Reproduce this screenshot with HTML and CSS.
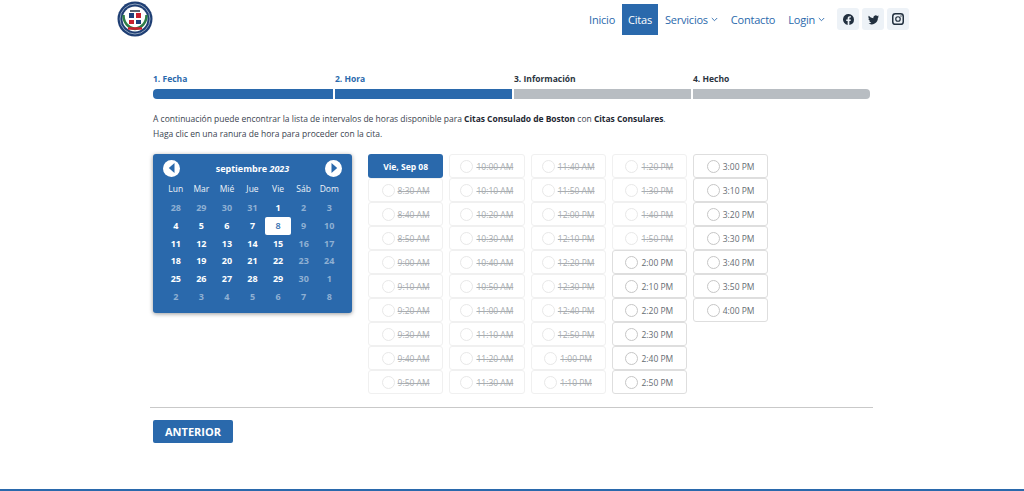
FILE: index.html
```html
<!DOCTYPE html>
<html lang="es">
<head>
<meta charset="utf-8">
<title>Citas</title>
<link rel="stylesheet" href="styles.css">
</head>
<body>
<header class="topbar">
  <a class="logo" href="#" aria-label="Logo">
    <svg width="36" height="36" viewBox="0 0 36 36">
      <circle cx="18" cy="18" r="17.500" fill="#1f3f74"/>
      <circle cx="18" cy="18" r="15" fill="none" stroke="#8fa3bd" stroke-width="1"/>
      <circle cx="18" cy="18" r="12.500" fill="#fff"/>
      <path d="M6.500 14c0 8 5 13 11.500 14 6.500-1 11.500-6 11.500-14" fill="none" stroke="#2e7d46" stroke-width="2.500"/>
      <path d="M13 9h10v2H13z" fill="#5a6472"/>
      <path d="M12 12h5v5h-5z" fill="#1d3f7c"/>
      <path d="M19 12h5v5h-5z" fill="#c8202f"/>
      <path d="M12 19h5v4h-5z" fill="#c8202f"/>
      <path d="M19 19h5v4h-5z" fill="#1d3f7c"/>
      <path d="M11 27.500h14" stroke="#c8202f" stroke-width="2.500"/>
    </svg>
  </a>
  <nav class="nav">
    <a href="#" class="nav-link">Inicio</a>
    <a href="#" class="nav-link active">Citas</a>
    <a href="#" class="nav-link">Servicios <svg class="caret" width="7" height="5" viewBox="0 0 7 5"><path d="M.8 1l2.700 2.700L6.200 1" fill="none" stroke="currentColor" stroke-width=".9"/></svg></a>
    <a href="#" class="nav-link">Contacto</a>
    <a href="#" class="nav-link">Login <svg class="caret" width="7" height="5" viewBox="0 0 7 5"><path d="M.8 1l2.700 2.700L6.200 1" fill="none" stroke="currentColor" stroke-width=".9"/></svg></a>
  </nav>
  <div class="socials">
    <a href="#" class="social" aria-label="Facebook"><svg width="11" height="11" viewBox="0 0 16 16"><path fill="#22303f" d="M16 8a8 8 0 1 0-9.250 7.900v-5.600H4.700V8h2.050V6.240c0-2 1.200-3.120 3.020-3.120.88 0 1.800.160 1.800.160v1.970h-1.010c-1 0-1.310.62-1.310 1.250V8h2.230l-.36 2.300H9.250v5.600A8 8 0 0 0 16 8z"/></svg></a>
    <a href="#" class="social" aria-label="Twitter"><svg width="11" height="11" viewBox="0 0 16 16"><path fill="#22303f" d="M16 3.500a6.500 6.500 0 0 1-1.900.5 3.300 3.300 0 0 0 1.450-1.800 6.600 6.600 0 0 1-2.100.8 3.300 3.300 0 0 0-5.600 3A9.300 9.300 0 0 1 1.100 2.600a3.300 3.300 0 0 0 1 4.400 3.300 3.300 0 0 1-1.500-.4c0 1.600 1.100 3 2.650 3.300a3.300 3.300 0 0 1-1.500.050 3.300 3.300 0 0 0 3.100 2.300A6.600 6.600 0 0 1 0 13.600 9.300 9.300 0 0 0 14.400 5.300c.6-.5 1.200-1.100 1.600-1.800z"/></svg></a>
    <a href="#" class="social" aria-label="Instagram"><svg width="12" height="12" viewBox="0 0 16 16"><rect x="1" y="1" width="14" height="14" rx="3.500" fill="none" stroke="#22303f" stroke-width="2"/><circle cx="8" cy="8" r="3" fill="none" stroke="#22303f" stroke-width="1.600"/><circle cx="12" cy="4" r=".9" fill="#22303f"/></svg></a>
  </div>
</header>

<main class="page">
  <ol class="steps">
    <li class="step first-step done"><span class="step-label">1. Fecha</span><span class="step-bar first"></span></li>
    <li class="step done"><span class="step-label">2. Hora</span><span class="step-bar"></span></li>
    <li class="step"><span class="step-label">3. Información</span><span class="step-bar"></span></li>
    <li class="step"><span class="step-label">4. Hecho</span><span class="step-bar last"></span></li>
  </ol>

  <p class="intro">A continuación puede encontrar la lista de intervalos de horas disponible para <b>Citas Consulado de Boston</b> con <b>Citas Consulares</b>.<br>Haga clic en una ranura de hora para proceder con la cita.</p>

  <div class="booking">
    <section class="calendar">
      <div class="cal-head">
        <span class="cal-arrow"><svg width="8" height="10" viewBox="0 0 8 10"><path d="M6.500 0v10L0.800 5z" fill="#2a69ac"/></svg></span>
        <span class="cal-title">septiembre <i>2023</i></span>
        <span class="cal-arrow"><svg width="8" height="10" viewBox="0 0 8 10"><path d="M1.500 0v10L7.200 5z" fill="#2a69ac"/></svg></span>
      </div>
      <div class="cal-grid names">
        <span>Lun</span><span>Mar</span><span>Mié</span><span>Jue</span><span>Vie</span><span>Sáb</span><span>Dom</span>
      </div>
      <div class="cal-grid days">
        <span class="off">28</span><span class="off">29</span><span class="off">30</span><span class="off">31</span><span>1</span><span class="off">2</span><span class="off">3</span>
        <span>4</span><span>5</span><span>6</span><span>7</span><span class="sel">8</span><span class="off">9</span><span class="off">10</span>
        <span>11</span><span>12</span><span>13</span><span>14</span><span>15</span><span class="off">16</span><span class="off">17</span>
        <span>18</span><span>19</span><span>20</span><span>21</span><span>22</span><span class="off">23</span><span class="off">24</span>
        <span>25</span><span>26</span><span>27</span><span>28</span><span>29</span><span class="off">30</span><span class="off">1</span>
        <span class="off">2</span><span class="off">3</span><span class="off">4</span><span class="off">5</span><span class="off">6</span><span class="off">7</span><span class="off">8</span>
      </div>
    </section>

    <div class="slots">
      <div class="slot-col">
        <div class="slot-date">Vie, Sep 08</div>
        <div class="slot gone"><i></i>8:30 AM</div>
        <div class="slot gone"><i></i>8:40 AM</div>
        <div class="slot gone"><i></i>8:50 AM</div>
        <div class="slot gone"><i></i>9:00 AM</div>
        <div class="slot gone"><i></i>9:10 AM</div>
        <div class="slot gone"><i></i>9:20 AM</div>
        <div class="slot gone"><i></i>9:30 AM</div>
        <div class="slot gone"><i></i>9:40 AM</div>
        <div class="slot gone"><i></i>9:50 AM</div>
      </div>
      <div class="slot-col">
        <div class="slot gone"><i></i>10:00 AM</div>
        <div class="slot gone"><i></i>10:10 AM</div>
        <div class="slot gone"><i></i>10:20 AM</div>
        <div class="slot gone"><i></i>10:30 AM</div>
        <div class="slot gone"><i></i>10:40 AM</div>
        <div class="slot gone"><i></i>10:50 AM</div>
        <div class="slot gone"><i></i>11:00 AM</div>
        <div class="slot gone"><i></i>11:10 AM</div>
        <div class="slot gone"><i></i>11:20 AM</div>
        <div class="slot gone"><i></i>11:30 AM</div>
      </div>
      <div class="slot-col">
        <div class="slot gone"><i></i>11:40 AM</div>
        <div class="slot gone"><i></i>11:50 AM</div>
        <div class="slot gone"><i></i>12:00 PM</div>
        <div class="slot gone"><i></i>12:10 PM</div>
        <div class="slot gone"><i></i>12:20 PM</div>
        <div class="slot gone"><i></i>12:30 PM</div>
        <div class="slot gone"><i></i>12:40 PM</div>
        <div class="slot gone"><i></i>12:50 PM</div>
        <div class="slot gone"><i></i>1:00 PM</div>
        <div class="slot gone"><i></i>1:10 PM</div>
      </div>
      <div class="slot-col">
        <div class="slot gone"><i></i>1:20 PM</div>
        <div class="slot gone"><i></i>1:30 PM</div>
        <div class="slot gone"><i></i>1:40 PM</div>
        <div class="slot gone"><i></i>1:50 PM</div>
        <div class="slot"><i></i>2:00 PM</div>
        <div class="slot"><i></i>2:10 PM</div>
        <div class="slot"><i></i>2:20 PM</div>
        <div class="slot"><i></i>2:30 PM</div>
        <div class="slot"><i></i>2:40 PM</div>
        <div class="slot"><i></i>2:50 PM</div>
      </div>
      <div class="slot-col">
        <div class="slot"><i></i>3:00 PM</div>
        <div class="slot"><i></i>3:10 PM</div>
        <div class="slot"><i></i>3:20 PM</div>
        <div class="slot"><i></i>3:30 PM</div>
        <div class="slot"><i></i>3:40 PM</div>
        <div class="slot"><i></i>3:50 PM</div>
        <div class="slot"><i></i>4:00 PM</div>
      </div>
    </div>
  </div>

  <hr class="rule">
  <button class="prev" type="button">ANTERIOR</button>
</main>
<div class="footer-line"></div>
</body>
</html>
```
FILE: styles.css
```css
* { box-sizing: border-box; }
html, body { height: 100%; }
body {
  margin: 0;
  height: 491px;
  overflow: hidden;
  background: #fff;
  color: #2b3440;
  font-family: "Open Sans", "Noto Sans", sans-serif;
  display: flex;
  flex-direction: column;
}
a { text-decoration: none; color: inherit; }

.topbar {
  display: flex;
  align-items: flex-start;
  height: 40px;
  padding: 1px 115px 0 117px;
}
.logo { display: block; height: 36px; margin-right: auto; }
.nav { display: flex; margin-top: 3px; height: 31px; }
.nav-link {
  display: flex;
  align-items: center;
  gap: 3px;
  padding: 0 6.500px;
  color: #2a69ac;
  font-size: 11px;
  letter-spacing: -.22px;
}
.nav-link.active { background: #2a69ac; color: #fff; }
.socials { display: flex; gap: 3px; margin: 7px 0 0 5.500px; }
.social {
  width: 22px;
  height: 22px;
  border-radius: 3px;
  background: #edf2f7;
  display: flex;
  align-items: center;
  justify-content: center;
}

.page {
  flex: 1;
  width: 723px;
  margin-left: 150px;
  padding: 32px 3px 0;
}
.steps {
  list-style: none;
  margin: 0;
  padding: 0;
  display: flex;
  gap: 2px;
  width: 717px;
}
.step { flex: 1; display: flex; flex-direction: column; }
.first-step { flex: 0 0 180px; }
.step-label {
  font-size: 8.500px;
  font-weight: 700;
  line-height: 14px;
  height: 17px;
  color: #2b3440;
}
.step.done .step-label { color: #2a69ac; }
.step-bar { height: 10px; background: #b8bdc2; }
.step.done .step-bar { background: #2a69ac; }
.step-bar.first { border-radius: 4px 0 0 4px; }
.step-bar.last { border-radius: 0 4px 4px 0; }

.intro {
  margin: 12px 0 13px;
  font-size: 8.500px;
  line-height: 15px;
  color: #3b4450;
}
.intro b { color: #1f2833; letter-spacing: -.05px; }

.booking { display: flex; align-items: flex-start; gap: 16px; }

.calendar {
  width: 199px;
  height: 159px;
  background: #2a69ac;
  border-radius: 3px;
  box-shadow: 0 1px 4px rgba(0,0,0,.4);
  padding: 5px 10px 0;
  color: #fff;
}
.cal-head {
  display: flex;
  align-items: center;
  justify-content: space-between;
  height: 18px;
}
.cal-arrow {
  width: 17px;
  height: 17px;
  border-radius: 50%;
  background: #fff;
  display: flex;
  align-items: center;
  justify-content: center;
}
.cal-title { font-size: 9px; font-weight: 700; }
.cal-grid {
  display: grid;
  grid-template-columns: repeat(7, 1fr);
  text-align: center;
}
.names { margin-top: 3px; font-size: 8.500px; line-height: 17px; color: #eef3f8; }
.days {
  margin-top: 2px;
  font-size: 9px;
  font-weight: 700;
  grid-auto-rows: 17.800px;
  align-items: center;
}
.days span { line-height: 17.800px; }
.days .off { color: #8fb0d3; font-weight: 700; }
.days .sel {
  background: #fff;
  color: #2a69ac;
  border-radius: 2px;
  font-weight: 600;
}

.slots { display: flex; gap: 6px; }
.slot-col { width: 75.250px; display: flex; flex-direction: column; }
.slot, .slot-date {
  height: 24px;
  display: flex;
  align-items: center;
  justify-content: center;
  font-size: 8.500px;
  border-radius: 3px;
}
.slot-date {
  background: #2a69ac;
  color: #fff;
  font-weight: 700;
}
.slot {
  border: 1px solid #dedede;
  color: #666c73;
  gap: 3px;
}
.slot i {
  width: 13px;
  height: 13px;
  border: 1px solid #c6c6c6;
  border-radius: 50%;
  background: #fff;
}
.slot.gone {
  border-color: #f0f0f0;
  color: #a9adb1;
  text-decoration: line-through;
}
.slot.gone i { border-color: #e8e8e8; }

.rule {
  margin: 13px -3px 12px;
  border: 0;
  border-top: 1px solid #c9c9c9;
}
.prev {
  display: block;
  width: 80px;
  height: 23px;
  padding: 0;
  border: 0;
  border-radius: 2px;
  background: #2a69ac;
  color: #fff;
  font-family: inherit;
  font-size: 11px;
  font-weight: 700;
}
.footer-line { height: 2px; background: #2a69ac; }
```
